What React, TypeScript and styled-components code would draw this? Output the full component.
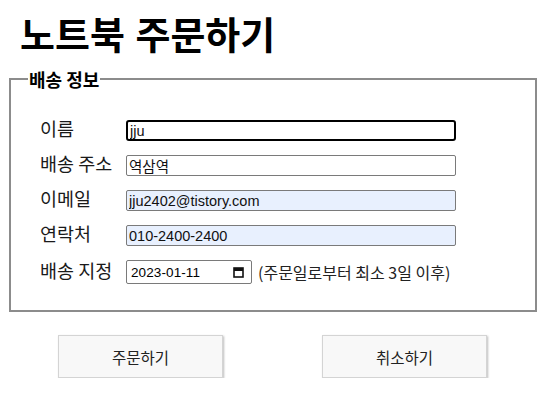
import React from 'react';
import styled, { createGlobalStyle } from 'styled-components';

const GlobalStyle = createGlobalStyle`
  body {
    margin: 8px;
    background: #ffffff;
    font-family: 'Liberation Sans', 'Noto Sans CJK KR', sans-serif;
    color: #000000;
  }
`;

const Title = styled.h1`
  font-family: 'Liberation Sans', 'Noto Sans CJK KR', sans-serif;
  font-size: 38px;
  font-weight: 700;
  line-height: 42px;
  margin: 7px 0 11px 12px;
`;

const Fieldset = styled.fieldset`
  width: 528px;
  box-sizing: border-box;
  margin: 0 0 0 1px;
  padding: 30px 0 26px 29px;
  border: 2px solid #8c8c8c;
`;

const Legend = styled.legend`
  font-family: 'Noto Sans CJK KR', sans-serif;
  font-size: 18px;
  font-weight: 700;
  line-height: 22px;
  padding: 0 1px;
  margin-left: -12px;
`;

const Form = styled.div`
  display: grid;
  grid-template-columns: 86px auto;
  row-gap: 14px;
  align-items: center;
`;

const Label = styled.label`
  font-family: 'Noto Sans CJK KR', sans-serif;
  font-size: 18.5px;
  color: #1a1a1a;
  line-height: 21px;
  position: relative;
  top: -2px;
  white-space: nowrap;
`;

const Input = styled.input<{ $filled?: boolean; $focused?: boolean }>`
  width: 330px;
  height: 21px;
  box-sizing: border-box;
  padding: 0 2px;
  font-family: 'Liberation Sans', 'Noto Sans CJK KR', sans-serif;
  font-size: 14.5px;
  color: #111;
  background: ${(p) => (p.$filled ? '#e8f0fe' : '#ffffff')};
  border: ${(p) => (p.$focused ? '2px solid #000' : '1px solid #7a7a7a')};
  border-radius: ${(p) => (p.$focused ? '3px' : '2px')};
  outline: none;
`;

const DateRow = styled.div`
  display: flex;
  align-items: center;
  gap: 6px;
`;

const DateBox = styled.div`
  width: 126px;
  height: 24px;
  box-sizing: border-box;
  padding: 0 7px 0 4px;
  display: flex;
  align-items: center;
  justify-content: space-between;
  border: 1px solid #7a7a7a;
  border-radius: 2px;
  background: #fff;
`;

const DateText = styled.span`
  font-family: 'Liberation Sans', sans-serif;
  font-size: 13.5px;
  letter-spacing: 0.1px;
  color: #000;
`;

const Hint = styled.span`
  font-family: 'Noto Sans CJK KR', sans-serif;
  font-size: 16px;
  color: #222;
`;

const Buttons = styled.div`
  display: flex;
  gap: 99px;
  padding: 23px 0 0 50px;
`;

const Button = styled.button`
  width: 165px;
  height: 43px;
  font-family: 'Noto Sans CJK KR', sans-serif;
  font-size: 15.5px;
  color: #222;
  background: #f8f8f8;
  border: 1px solid #d4d4d4;
  box-shadow: 1px 1px 2px #bdbdbd;
  cursor: pointer;
`;

const CalendarIcon: React.FC = () => (
  <svg width="11" height="11" viewBox="0 0 11 11">
    <rect x="1" y="1" width="9" height="9" fill="none" stroke="#111" strokeWidth="1.6" />
    <rect x="1" y="1" width="9" height="3" fill="#111" />
  </svg>
);

const App: React.FC = () => {
  return (
    <>
      <GlobalStyle />
      <Title>노트북 주문하기</Title>
      <Fieldset>
        <Legend>배송 정보</Legend>
        <Form>
          <Label>이름</Label>
          <Input $focused defaultValue="jju" />
          <Label>배송 주소</Label>
          <Input defaultValue="역삼역" />
          <Label>이메일</Label>
          <Input $filled defaultValue="jju2402@tistory.com" />
          <Label>연락처</Label>
          <Input $filled defaultValue="010-2400-2400" />
          <Label>배송 지정</Label>
          <DateRow>
            <DateBox>
              <DateText>2023-01-11</DateText>
              <CalendarIcon />
            </DateBox>
            <Hint>(주문일로부터 최소 3일 이후)</Hint>
          </DateRow>
        </Form>
      </Fieldset>
      <Buttons>
        <Button>주문하기</Button>
        <Button>취소하기</Button>
      </Buttons>
    </>
  );
};

export default App;
